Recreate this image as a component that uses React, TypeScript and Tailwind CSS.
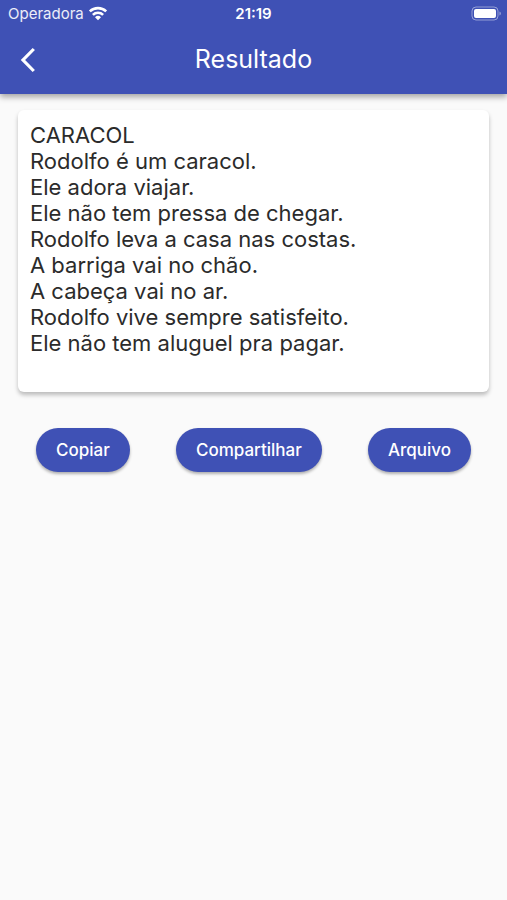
const lines = [
  "CARACOL",
  "Rodolfo é um caracol.",
  "Ele adora viajar.",
  "Ele não tem pressa de chegar.",
  "Rodolfo leva a casa nas costas.",
  "A barriga vai no chão.",
  "A cabeça vai no ar.",
  "Rodolfo vive sempre satisfeito.",
  "Ele não tem aluguel pra pagar.",
];

function WifiIcon() {
  return (
    <svg viewBox="0 0 20 16" className="h-4 w-5" aria-hidden="true">
      <g fill="none" stroke="white" strokeWidth="2.6">
        <path d="M1.8 5.4a11.8 11.8 0 0 1 16.4 0" />
        <path d="M4.9 8.9a7.3 7.3 0 0 1 10.2 0" />
      </g>
      <path d="M10 14.2l-3-3a4.3 4.3 0 0 1 6 0z" fill="white" />
    </svg>
  );
}

function BatteryIcon() {
  return (
    <svg viewBox="0 0 32 16" className="h-4 w-8" aria-hidden="true">
      <rect x="1" y="1" width="26" height="13" rx="4" fill="none" stroke="white" strokeOpacity="0.45" />
      <rect x="3" y="3" width="22" height="9" rx="2" fill="white" />
      <path d="M28.5 5.5v4c1.8-.6 1.8-3.4 0-4z" fill="white" fillOpacity="0.5" />
    </svg>
  );
}

function ActionButton({ label }: { label: string }) {
  return (
    <button
      type="button"
      className="h-11 rounded-full bg-[#3f51b5] px-5 text-[17px] leading-6 font-medium text-white shadow-[0_2px_3px_rgba(0,0,0,0.3)]"
    >
      {label}
    </button>
  );
}

export default function App() {
  return (
    <div className="min-h-screen bg-[#fafafa] font-['Inter',sans-serif]">
      <header className="bg-[#3f51b5] text-white shadow-[0_3px_6px_rgba(0,0,0,0.35)]">
        <div className="grid h-7 grid-cols-3 items-center px-1 text-[15px]">
          <div className="flex items-center gap-1 pl-1 text-white/90">
            <span>Operadora</span>
            <WifiIcon />
          </div>
          <span className="text-center font-semibold">21:19</span>
          <div className="flex justify-end">
            <BatteryIcon />
          </div>
        </div>
        <div className="grid h-[66px] grid-cols-[56px_1fr_56px] items-center pb-0.5">
          <button type="button" aria-label="Voltar" className="flex h-full items-center justify-center">
            <svg viewBox="0 0 16 26" className="h-[26px] w-4" aria-hidden="true">
              <path d="M13.8 2L3 13l10.8 11" fill="none" stroke="white" strokeWidth="3.2" />
            </svg>
          </button>
          <h1 className="text-center text-[25px] font-normal">Resultado</h1>
        </div>
      </header>
      <main className="px-[18px] pt-4">
        <section className="rounded-md bg-white px-3 pt-3 pb-9 text-[22px] leading-[26px] text-[#2b2b2b] shadow-[0_3px_4px_rgba(0,0,0,0.25)]">
          {lines.map((line) => (
            <p key={line}>{line}</p>
          ))}
        </section>
        <div className="flex justify-between px-[18px] pt-9">
          <ActionButton label="Copiar" />
          <ActionButton label="Compartilhar" />
          <ActionButton label="Arquivo" />
        </div>
      </main>
    </div>
  );
}
